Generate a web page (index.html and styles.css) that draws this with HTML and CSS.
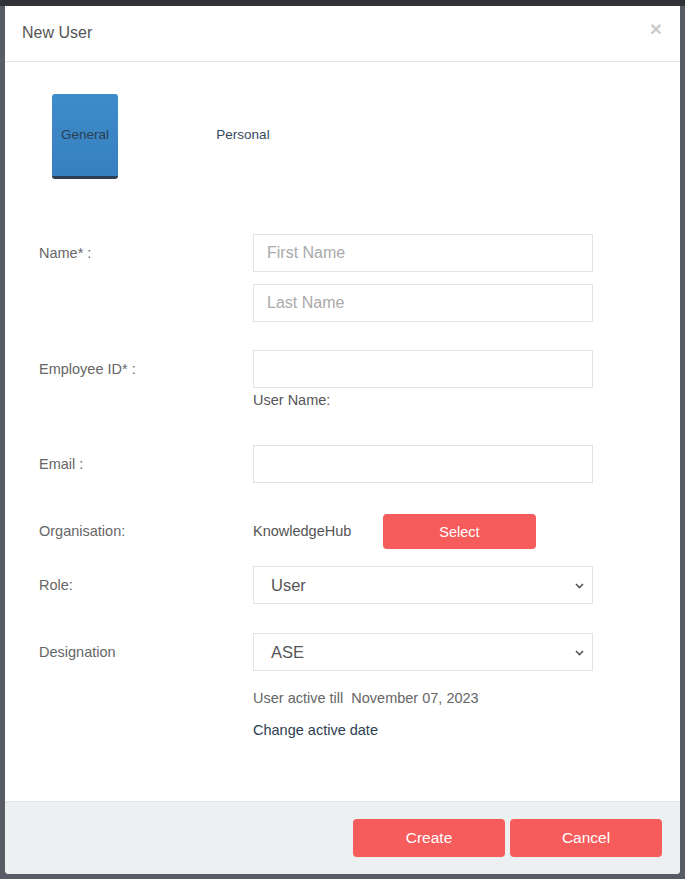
FILE: index.html
```html
<!doctype html>
<html>
<head>
    <meta charset="UTF-8">
    <title>New User</title>
    <link rel="stylesheet" href="styles.css">
</head>
<body>
<div class="topbar"></div>
<div class="modal">
    <div class="modal-header">
        <h4 class="modal-title">New User</h4>
        <button class="close" type="button">&times;</button>
    </div>
    <div class="modal-body">
        <ul class="tabs">
            <li class="tab active">General</li>
            <li class="tab">Personal</li>
        </ul>

        <div class="row row-name">
            <label class="label">Name* :</label>
            <div class="field stack">
                <input class="input" type="text" placeholder="First Name">
                <input class="input" type="text" placeholder="Last Name">
            </div>
        </div>

        <div class="row row-emp">
            <label class="label">Employee ID* :</label>
            <div class="field">
                <input class="input" type="text">
                <div class="hint">User Name:</div>
            </div>
        </div>

        <div class="row row-email">
            <label class="label">Email :</label>
            <div class="field">
                <input class="input" type="text">
            </div>
        </div>

        <div class="row row-org">
            <label class="label label-short">Organisation:</label>
            <div class="field inline">
                <span class="org-name">KnowledgeHub</span>
                <button class="btn btn-red btn-select" type="button">Select</button>
            </div>
        </div>

        <div class="row row-role">
            <label class="label">Role:</label>
            <div class="field">
                <div class="select">
                    <span>User</span>
                    <svg width="9" height="6" viewBox="0 0 9 6"><path d="M1 1l3.5 3.5L8 1" fill="none" stroke="#555" stroke-width="1.6"/></svg>
                </div>
            </div>
        </div>

        <div class="row row-desig">
            <label class="label">Designation</label>
            <div class="field">
                <div class="select">
                    <span>ASE</span>
                    <svg width="9" height="6" viewBox="0 0 9 6"><path d="M1 1l3.5 3.5L8 1" fill="none" stroke="#555" stroke-width="1.6"/></svg>
                </div>
            </div>
        </div>

        <div class="active-till">User active till&nbsp; November 07, 2023</div>
        <a class="change-date">Change active date</a>
    </div>
    <div class="modal-footer">
        <button class="btn btn-red btn-footer" type="button">Create</button>
        <button class="btn btn-red btn-footer" type="button">Cancel</button>
    </div>
</div>
</body>
</html>
```

FILE: styles.css
```css
* {
    margin: 0;
    padding: 0;
    box-sizing: border-box;
}

body {
    background: #575c67;
    font-family: "Liberation Sans", Arial, sans-serif;
    font-size: 14.5px;
    color: #666;
    height: 879px;
    overflow: hidden;
}

.topbar {
    height: 6px;
    background: #303238;
}

.modal {
    margin-left: 5px;
    width: 675px;
    height: 868px;
    background: #fff;
    border-radius: 0 0 4px 4px;
    display: flex;
    flex-direction: column;
}

.modal-header {
    height: 56px;
    border-bottom: 1px solid #e5e5e5;
    display: flex;
    align-items: center;
    justify-content: space-between;
    padding: 0 18px 0 17px;
}

.modal-title {
    font-size: 16px;
    font-weight: normal;
    color: #555;
    margin-top: -2px;
}

.close {
    border: 0;
    background: none;
    font-family: "Liberation Sans", Arial, sans-serif;
    font-size: 21px;
    font-weight: bold;
    color: #cacaca;
    line-height: 1;
    margin-top: -11px;
}

.modal-body {
    flex: 1;
    padding: 32px 0 0 34px;
}

.tabs {
    list-style: none;
    display: flex;
    gap: 92px;
    margin-left: 13px;
}

.tab {
    width: 66px;
    height: 85px;
    display: flex;
    align-items: center;
    justify-content: center;
    font-size: 13.5px;
    color: #34495e;
    padding-bottom: 5px;
}

.tab.active {
    background: linear-gradient(#3f8cca, #3680bf);
    border-bottom: 3px solid #2c3e50;
    border-radius: 3px;
    color: #2c3e50;
    padding-bottom: 2px;
}

.row {
    display: flex;
    align-items: flex-start;
}

.label {
    width: 214px;
    line-height: 38px;
    color: #666;
}

.label-short {
    line-height: 35px;
}

.field {
    width: 340px;
}

.stack {
    display: flex;
    flex-direction: column;
    gap: 12px;
}

.input {
    display: block;
    width: 340px;
    height: 38px;
    border: 1px solid #e3e3e3;
    padding: 0 13px;
    font-family: "Liberation Sans", Arial, sans-serif;
    font-size: 16px;
    color: #555;
    outline: none;
}

.input::placeholder {
    color: #aaa;
}

.hint {
    margin-top: 2px;
    line-height: 20px;
    color: #555;
}

.row-name { margin-top: 55px; }
.row-emp { margin-top: 28px; }
.row-email { margin-top: 35px; }
.row-org { margin-top: 31px; }
.row-role { margin-top: 17px; }
.row-desig { margin-top: 29px; }

.inline {
    display: flex;
    align-items: center;
}

.org-name {
    width: 130px;
    color: #555;
    margin-top: -2px;
}

.btn {
    border: 0;
    font-family: "Liberation Sans", Arial, sans-serif;
    color: #fff;
    cursor: pointer;
}

.btn-red {
    background: #f75c5c;
    border-radius: 4px;
}

.btn-select {
    width: 153px;
    height: 35px;
    font-size: 14.5px;
}

.select {
    height: 38px;
    border: 1px solid #e3e3e3;
    display: flex;
    align-items: center;
    justify-content: space-between;
    padding: 0 8px 0 17px;
    font-size: 16.5px;
    color: #555;
}

.select svg {
    margin-top: 2px;
}

.active-till {
    margin: 17px 0 0 214px;
    line-height: 20px;
    color: #666;
}

.change-date {
    display: block;
    margin: 12px 0 0 214px;
    line-height: 20px;
    color: #2c3e50;
}

.modal-footer {
    height: 73px;
    background: #ecf0f1;
    border-top: 1px solid #e2e6e8;
    border-radius: 0 0 4px 4px;
    display: flex;
    justify-content: flex-end;
    align-items: center;
    gap: 5px;
    padding: 0 18px 1px 0;
}

.btn-footer {
    width: 152px;
    height: 38px;
    font-size: 15.5px;
}
```
